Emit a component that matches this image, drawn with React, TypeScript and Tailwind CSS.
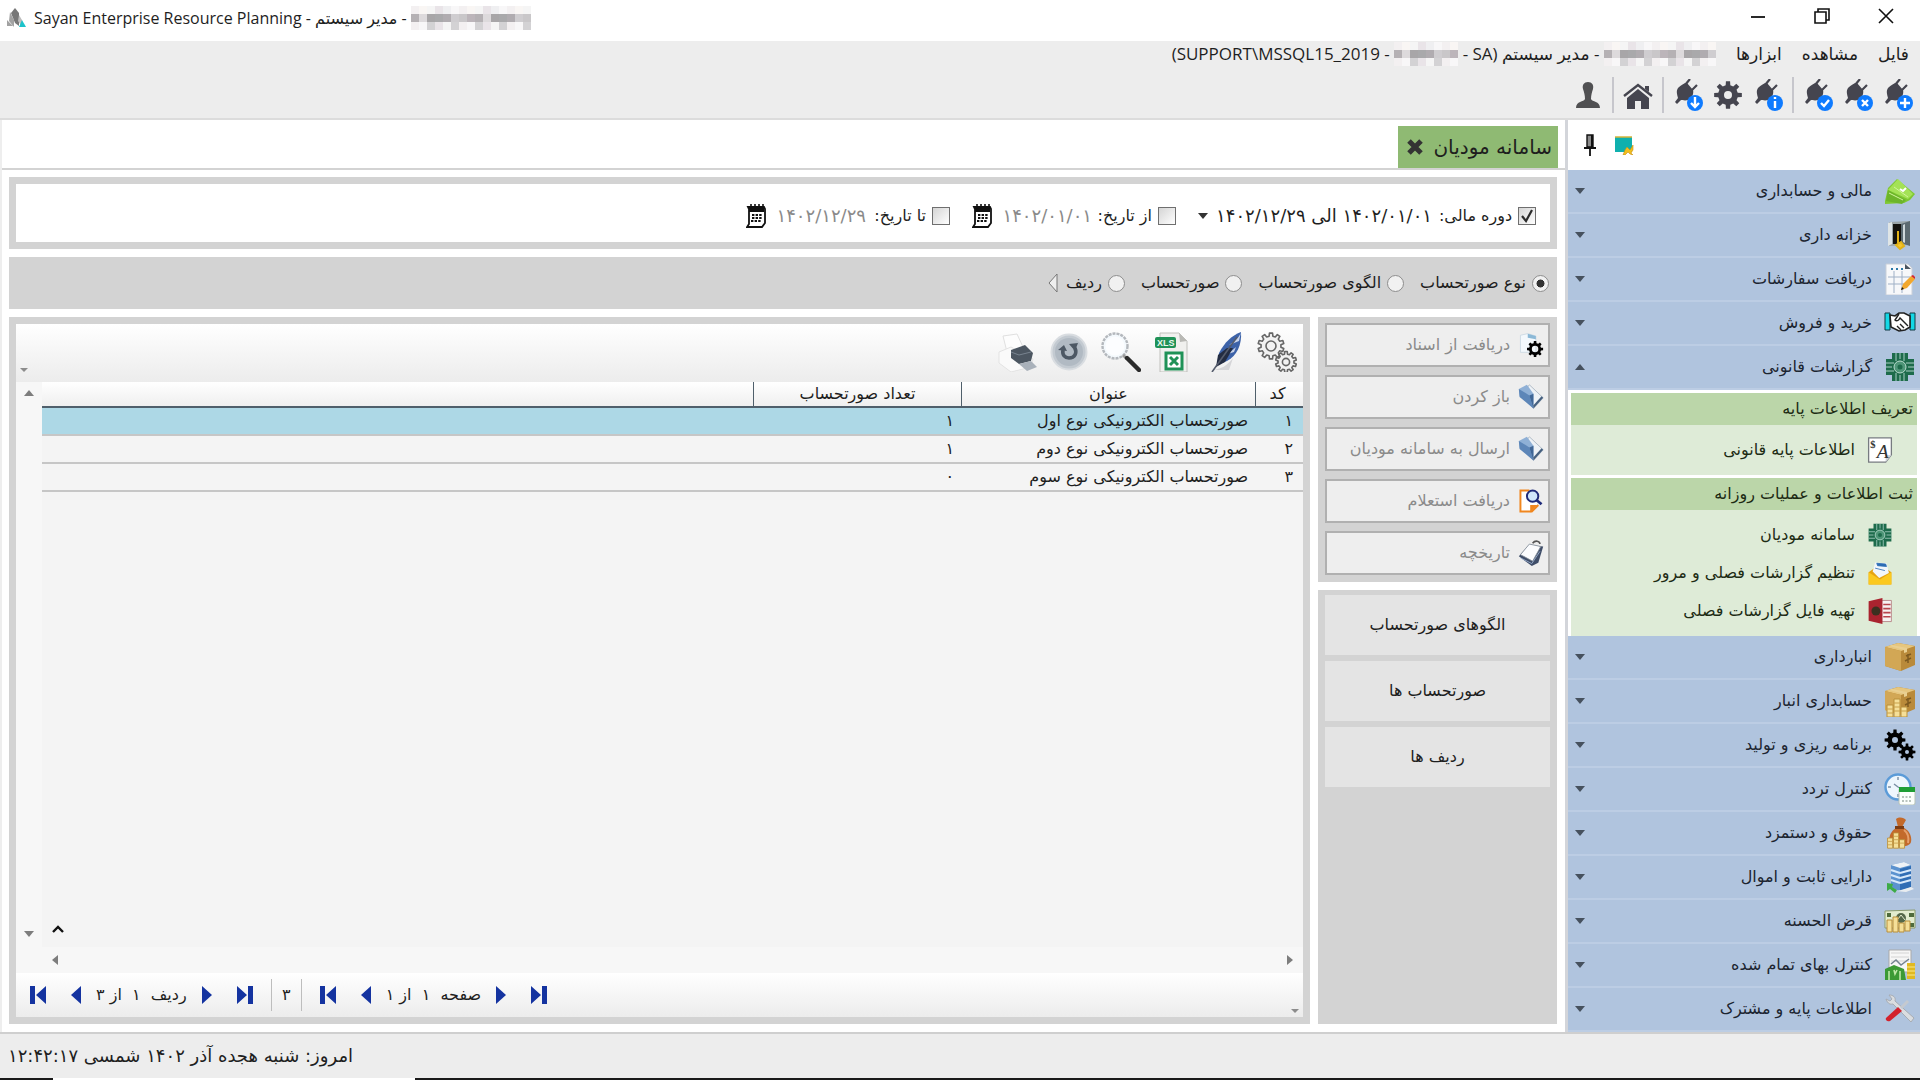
import React, { ReactNode } from 'react'

const dark = '#45454f'

function gearPath(cx: number, cy: number, outer: number, inner: number, teeth: number) {
  const points: string[] = []
  const step = (Math.PI * 2) / teeth
  for (let i = 0; i < teeth; i++) {
    const a = i * step - Math.PI / 2
    const corners = [[-0.3, inner], [-0.19, outer], [0.19, outer], [0.3, inner]]
    corners.forEach(([offset, r]) => {
      const t = a + offset * step
      points.push(`${(cx + r * Math.cos(t)).toFixed(2)} ${(cy + r * Math.sin(t)).toFixed(2)}`)
    })
  }
  return 'M' + points.join('L') + 'Z'
}

/* ---------- top toolbar icons ---------- */

const Plug = ({ children }: { children: ReactNode }) => (
  <svg className="w-8 h-8" viewBox="0 0 32 32" aria-hidden="true">
    <path d="M6 9c3-3 6-5 9-5l6 7c1 4-1 8-5 10-3 1-6 0-7 0l-4 4-2-2 3-4c-1-4-2-7 0-10z" fill={dark} />
    <path d="M13 6l5-6M19 12l6-6" stroke={dark} strokeWidth="2.2" />
    <circle cx="23" cy="24" r="8" fill="#0f7bff" />
    <g stroke="#fff" strokeWidth="2.4" fill="none">{children}</g>
  </svg>
)

const GearIcon = () => (
  <svg className="w-8 h-8" viewBox="0 0 32 32" aria-hidden="true">
    <path fillRule="evenodd" fill={dark} d={gearPath(16, 16, 14, 10, 8) + 'M16 12a4 4 0 1 0 0 8 4 4 0 0 0 0-8z'} />
  </svg>
)

const HomeIcon = () => (
  <svg className="w-8 h-8" viewBox="0 0 32 32" aria-hidden="true">
    <path d="M2 17L16 6l14 11" stroke={dark} strokeWidth="2.4" fill="none" />
    <path d="M23 7h4v6l-4-3zM16 10l11 9v11h-8v-8h-6v8H5V19z" fill={dark} />
  </svg>
)

const UserIcon = () => (
  <svg className="w-8 h-8" viewBox="0 0 32 32" aria-hidden="true">
    <path d="M16 3c4 0 6 3 5 7-1 3-2 6-2 10 1 3 9 2 9 9H4c0-7 8-6 9-9 0-4-1-7-2-10-1-4 1-7 5-7z" fill="#505052" />
  </svg>
)

/* ---------- sidebar icons ---------- */

const MoneyIcon = () => (
  <>
    <path d="M1 26l3-13 9-9 18 15-5 6-6 3-19 1z" fill="#7fc832" />
    <path d="M4 15l10-11 15 15-5 5z" fill="#a4e256" />
    <path d="M2 26l2-11 18 10-4 4z" fill="#6db52a" />
    <path d="M5 18l14 7M10 12l14 10" stroke="#d2f59b" fill="none" />
    <path d="M16 14l3 2 3-3" stroke="#fff" strokeWidth="2" fill="none" />
  </>
)
const SafeIcon = () => (
  <>
    <path d="M5 3l21-1v24l-21 1z" fill="#9ba5a8" />
    <path d="M9 5h8v20H9z" fill="#14130f" />
    <path d="M17 5l9-3v25l-9-3z" fill="#5c6a70" />
    <path d="M19 6l2-1v19l-2-1z" fill="#cfd8da" />
    <path d="M4 4l4-1v22l-4 2z" fill="#dfe5e6" />
    <path d="M14 12v12M12 26l5-3 3 4-4 3z" stroke="#e3b317" strokeWidth="2" fill="#f4c52d" />
  </>
)
const NoteIcon = () => (
  <>
    <path d="M2 1h22l4 4v27H2z" fill="#f7f8fa" stroke="#c9cfd8" />
    <path d="M10 8v22M18 8v22M4 14h22M4 21h22" stroke="#9fb0c6" />
    <path d="M7 6h2M12 6h2M17 6h2" stroke="#2a78a8" strokeWidth="2" />
    <path d="M21 1v5h6z" fill="#4b5560" />
    <path d="M17 27l2-6 8-8 4 3-8 9z" fill="#f3a82c" />
    <path d="M27 13l2-1 2 2v2z" fill="#d8242c" />
    <path d="M17 27l1-3 2 2z" fill="#1a1a1a" />
  </>
)
const HandshakeIcon = () => (
  <>
    <path d="M1 6h5v17H1zM26 6h5v17h-5z" fill="#14d8e6" stroke="#103a44" />
    <path d="M6 8l5 1 4-3h5l6 3v11l-5 3-6 1-8-4z" fill="#fff" stroke="#222" strokeWidth="1.6" />
    <path d="M15 7l-4 6c2 2 4 0 5-2l8 8M13 19l4 4M16 17l4 4" stroke="#222" strokeWidth="1.4" fill="none" />
  </>
)
const TaxIcon = () => (
  <>
    <path d="M8 2h16v6h6v16h-6v6H8v-6H2V8h6z" fill="#1d6b4b" />
    <path d="M12 2v8M16 2v6M20 2v8M12 30v-8M16 30v-6M20 30v-8M2 12h8M2 16h6M2 20h8M30 12h-8M30 16h-6M30 20h-8" stroke="#a9cfc4" />
    <circle cx="16" cy="16" r="6" fill="#4f9678" stroke="#b9dccf" />
    <circle cx="16" cy="16" r="2.5" fill="#1d6b4b" />
  </>
)
const Box = () => (
  <>
    <path d="M1 6l13-4 17 3v19l-14 6-16-5z" fill="#b98a3a" />
    <path d="M1 6l13-4 17 3-14 5z" fill="#e6c67e" />
    <path d="M1 6l16 4v20L1 25z" fill="#d2a755" />
    <path d="M8 4l15 3v4l-3 1V9L5 5z" fill="#e9cf91" />
    <path d="M22 15l5-2M21 20l6-3M24 13v9" stroke="#7d5a20" strokeWidth="1.5" />
  </>
)
const Coins = () => (
  <>
    <path d="M3 20h6v12H3zM10 14h6v18h-6zM17 22h6v10h-6z" fill="#f5df98" stroke="#b98f3a" />
    <path d="M3 24h6M3 28h6M10 18h6M10 22h6M10 26h6M17 26h6" stroke="#c9a14b" />
  </>
)
const BoxCoinsIcon = () => (
  <>
    <Box />
    <Coins />
  </>
)
const GearsIcon = () => (
  <>
    <path fillRule="evenodd" d={gearPath(11, 11, 10.5, 7.5, 8) + 'M11 8a3 3 0 1 0 0 6 3 3 0 0 0 0-6z'} />
    <path fillRule="evenodd" d={gearPath(23, 23, 8.5, 6, 8) + 'M23 21a2 2 0 1 0 0 4 2 2 0 0 0 0-4z'} />
  </>
)
const ClockIcon = () => (
  <>
    <circle cx="14" cy="14" r="12.5" fill="#eef6fd" stroke="#5b9bd8" strokeWidth="2.4" />
    <path d="M14 4v3M4 14h3M14 21v3M14 14l5 3M14 14l-4-3" stroke="#7a8ea3" strokeWidth="1.4" />
    <rect x="15" y="15" width="16" height="17" rx="2" fill="#fcfffc" stroke="#b7c2b7" />
    <path d="M15 14h16v5H15z" fill="#1f9e35" />
    <path d="M18 24h10M18 28h10" stroke="#b9c4bd" strokeDasharray="2 1.5" strokeWidth="2" />
  </>
)
const BagIcon = () => (
  <>
    <path d="M12 2c4-3 8-1 10 1l-4 7c8 3 10 10 9 15-1 6-18 6-21 1-2-6 1-13 8-16z" fill="#c36a2b" />
    <path d="M11 9h9v3h-9z" fill="#7d3c12" />
    <path d="M20 13c4 3 5 8 4 13" stroke="#e6a06b" strokeWidth="2" fill="none" />
    <g transform="translate(1 4) scale(.85)"><Coins /></g>
  </>
)
const BuildingIcon = () => (
  <>
    <path d="M7 4l13-3 7 3v22l-12 4-8-4z" fill="#5b92cf" />
    <path d="M7 4l13-3 7 3-11 3z" fill="#eef2f6" />
    <path d="M16 8l11-3v21l-11 4z" fill="#2f6db5" />
    <path d="M16 12l11-3M16 17l11-3M16 22l11-3M7 9l9 3M7 14l9 3M7 19l9 3" stroke="#d6e8fa" strokeWidth="2" />
    <path d="M12 30l10 1 8-3-3-2-10 3z" fill="#e9edf0" />
    <path d="M3 22l6 1-1 3 5 3-2 3-5-4-3 2z" fill="#3dab46" />
  </>
)
const BankNoteIcon = () => (
  <>
    <path d="M1 6l30-1v18H1z" fill="#e2ecce" stroke="#8a9a6d" />
    <path d="M3 8h4v4H3zM25 8h5v4h-5zM26 18h4v4h-4z" fill="#4f6b3c" />
    <circle cx="17" cy="13" r="5" fill="#55684a" />
    <path d="M14 14l3-4 4 5" stroke="#e2ecce" fill="none" />
    <path d="M3 15h5v12H3zM9 12h5v15H9zM15 18h5v9h-5zM21 16h5v10h-5z" fill="#f5df98" stroke="#b98f3a" />
  </>
)
const CostIcon = () => (
  <>
    <path d="M5 1h22v22H5z" fill="#f6f6f6" stroke="#a9a9a9" />
    <path d="M7 4h18M7 8h18M7 12h18" stroke="#d4d4d4" />
    <path d="M7 15l5-4 5 5 8-6" stroke="#748391" fill="none" strokeWidth="1.5" />
    <path d="M23 14h8v16h-8z" fill="#e0b922" />
    <path d="M23 18h8M23 22h8M23 26h8" stroke="#fbe98a" />
    <path d="M1 20l9-4 10 4 2 11H1z" fill="#3c9a35" />
    <path d="M5 22v9M10 21l1 4 2-4M16 22v9" stroke="#bfe8a9" strokeWidth="1.6" fill="none" />
  </>
)
const ToolsIcon = () => (
  <>
    <path d="M5 2c4 0 7 2 6 6l19 17-3 4L9 11C5 12 3 9 2 6l4 2 2-2z" fill="#dadde0" stroke="#a7acb2" />
    <path d="M14 14l4 4L6 28c-3 1-5-1-4-3z" fill="#d3222d" />
    <path d="M16 14l7-7 2 2-7 7z" fill="#c5c9cf" />
  </>
)
const SheetIcon = () => (
  <>
    <path d="M2 1h28v21l-7 9H2z" fill="#fff" stroke="#777b80" strokeWidth="1.6" />
    <path d="M30 22h-7v9z" fill="#cfd3d8" />
    <text x="4" y="14" fontSize="13" fontWeight="bold" fill="#333" className="[direction:ltr] font-[Liberation_Serif,serif]">$</text>
    <text x="12" y="26" fontSize="24" fontStyle="italic" fill="#333" className="[direction:ltr] font-[Liberation_Serif,serif]">A</text>
  </>
)
const EnvelopeIcon = () => (
  <>
    <path d="M2 15L16 5l14 10v15H2z" fill="#e6a413" />
    <path d="M10 3l14 1 3 12-12 6L7 14z" fill="#f2f6fb" />
    <path d="M12 4l11 1 1 3-11-1zM10 10l12 3" stroke="#2c6cb4" fill="#2c6cb4" />
    <path d="M2 15l14 9 14-9v15H2z" fill="#fbc91f" />
  </>
)
const BookIcon = () => (
  <>
    <path d="M18 3h12v26H18z" fill="#f7f2f2" stroke="#b07a7e" />
    <path d="M20 8h9M20 13h9M20 18h9M20 23h9" stroke="#b8454d" strokeWidth="2" />
    <path d="M2 4l17-4v32L2 28z" fill="#a9232f" />
    <circle cx="11" cy="16" r="5.5" fill="#3b3020" />
  </>
)

/* ---------- action button icons ---------- */

const DocGearIcon = () => (
  <>
    <path d="M3 4l9-2 10 3v20H3z" fill="#f3f8fc" stroke="#c8d6e2" />
    <path d="M12 2l10 3v4l-10-2z" fill="#8bb8d6" />
    <path fillRule="evenodd" d={gearPath(21, 21, 10, 7.5, 8) + 'M21 17a4 4 0 1 0 0 8 4 4 0 0 0 0-8z'} />
  </>
)
const OpenIcon = () => (
  <>
    <path d="M14 1l17 16-12 13L4 13z" fill="#eef2f6" stroke="#a3afbc" />
    <path d="M1 6l10-5 8 11v18L2 15z" fill="#8fb0d6" />
    <path d="M1 6l13 8 5 16L2 16z" fill="#5d86b8" />
    <path d="M14 14l5-2v18z" fill="#3f6696" />
    <path d="M19 30l12-13-2-2-10 11z" fill="#46607f" />
  </>
)
const InquiryIcon = () => (
  <>
    <path d="M14 3H3v26h14l8-8" fill="#fff" stroke="#f0861e" strokeWidth="2.4" />
    <path d="M15 30v-9h9z" fill="#f0861e" />
    <circle cx="18" cy="10" r="7" fill="#cfe6fb" stroke="#1e2a7a" strokeWidth="2.4" />
    <path d="M23 15l6 5" stroke="#1e2a7a" strokeWidth="3.4" />
  </>
)
const HistoryIcon = () => (
  <>
    <path d="M1 20L14 6l17 2-6 20-8 4z" fill="#3f4d68" />
    <path d="M3 18L14 5l14 3-10 18z" fill="#fbfcfe" stroke="#7d8794" />
    <path d="M18 4c3-4 9-3 9 1" stroke="#555" strokeWidth="2" fill="none" />
    <path d="M3 22l14 7 10-15" stroke="#9fb4d4" fill="none" />
  </>
)

const Icon = ({ draw, big }: { draw: ReactNode, big?: boolean }) => (
  <svg className={big ? 'w-8 h-8 shrink-0' : 'w-[26px] h-[26px] shrink-0'} viewBox="0 0 32 32" aria-hidden="true">{draw}</svg>
)

/* ---------- grid toolbar icons ---------- */

const gridTools = [
  {
    name: 'تنظیمات',
    draw: (
      <g fill="#f2f2f2" stroke="#666" strokeWidth="1.6" strokeLinejoin="round">
        <path d={gearPath(14, 14, 13, 10, 10)} />
        <circle cx="14" cy="14" r="5" />
        <path d={gearPath(29, 30, 10.5, 8, 10)} />
        <circle cx="29" cy="30" r="3.6" />
      </g>
    ),
  },
  {
    name: 'ویرایش',
    draw: (
      <>
        <path d="M8 38c8-1 14-4 20-12l-4 12z" fill="#d5d5d8" />
        <path d="M36 0c1 12-4 24-14 29l-10 4 2-12C20 10 26 4 36 0z" fill="#3c62a8" />
        <path d="M36 0c-2 6-6 9-12 13l10-4zM31 15l-8 7 6-2z" fill="#c9d4ea" />
        <path d="M22 16l6 0-8 14-9 5 2-12z" fill="#232c42" />
        <path d="M32 5L7 40" stroke="#555c6c" strokeWidth="1.6" />
      </>
    ),
  },
  {
    name: 'خروجی اکسل',
    draw: (
      <>
        <path d="M7 1h19l8 8v31H7z" fill="#f0f0ee" stroke="#c0c0bc" />
        <path d="M26 1l8 8-7 1z" fill="#b9b9b5" />
        <rect x="2" y="5" width="21" height="11" rx="2" fill="#1f9257" />
        <text x="4" y="14" fontSize="9" fontWeight="bold" fill="#e9f7ef" className="[direction:ltr] font-[Liberation_Sans,sans-serif]">XLS</text>
        <rect x="13" y="21" width="16" height="16" fill="#fff" stroke="#1f9257" strokeWidth="3" />
        <path d="M17 25l8 8M25 25l-8 8" stroke="#1f9257" strokeWidth="3" />
      </>
    ),
  },
  {
    name: 'جستجو',
    draw: (
      <>
        <circle cx="14" cy="14" r="12.5" fill="#f4f9fd" stroke="#b4b8bd" strokeWidth="2.4" strokeDasharray="3 1" />
        <circle cx="14" cy="14" r="9.5" fill="#fff" opacity=".7" />
        <path d="M22 23l4 4" stroke="#9b9b9b" strokeWidth="3" />
        <path d="M26 26l12 12" stroke="#2b2b2b" strokeWidth="4.4" strokeLinecap="round" />
      </>
    ),
  },
  {
    name: 'بازخوانی',
    draw: (
      <>
        <circle cx="20" cy="20" r="17.5" fill="#c3cad1" stroke="#d9dde1" strokeWidth="2" />
        <circle cx="20" cy="20" r="14" fill="#b1bac3" />
        <path d="M14 18c-1 5 2 8 6 8 6 0 8-5 6-10" stroke="#4d5864" strokeWidth="3.6" fill="none" />
        <path d="M9 18l6-5 3 6zM20 12l9-1-3 8z" fill="#4d5864" />
      </>
    ),
  },
  {
    name: 'چاپ',
    draw: (
      <>
        <path d="M6 4l14-2 6 13-16 5z" fill="#fdfdfd" stroke="#e0e0e0" />
        <path d="M2 20l12-5 22 12-2 8-20 5-12-9z" fill="#fafafa" stroke="#e3e3e3" />
        <path d="M14 18l14-5 8 8-2 8-12 3-8-6z" fill="#4c5661" />
        <path d="M22 32l12-3 6 6-10 4z" fill="#a9b1ba" />
        <path d="M14 20l8 3 12-3" stroke="#78838f" fill="none" />
      </>
    ),
  },
]

const mosaicTones = ['#f3f0f1', '#f8f7f8', '#efeff1', '#e9e4e8', '#f5f5f5', '#f9f6f4']
const mosaicDark = ['#b5b1b4', '#a9a9ab', '#c9c7c9', '#dddadc', '#b0acb0', '#bcb5ba', '#a8a6a8', '#cfcdd0']

// pixelated strip that hides a name
const Mosaic = ({ cols }: { cols: number }) => (
  <svg className="h-6 shrink-0" width={cols * 8} viewBox={`0 0 ${cols * 8} 24`} shapeRendering="crispEdges" aria-hidden="true">
    {Array.from({ length: cols }, (_, i) => (
      <g key={i}>
        <rect x={i * 8} y="0" width="8" height="8" fill={mosaicTones[(i * 5) % 6]} />
        <rect x={i * 8} y="8" width="8" height="8" fill={mosaicDark[(i * 3) % 8]} />
        <rect x={i * 8} y="16" width="8" height="8" fill={i % 3 == 2 ? '#d3d2d4' : mosaicTones[(i * 7) % 6]} />
      </g>
    ))}
  </svg>
)

const Triangle = ({ className }: { className: string }) => (
  <svg className={className} viewBox="0 0 10 6" preserveAspectRatio="none" fill="currentColor" aria-hidden="true">
    <path d="M0 0h10L5 6z" />
  </svg>
)

const modules = [
  { title: 'مالی و حسابداری', icon: <MoneyIcon /> },
  { title: 'خزانه داری', icon: <SafeIcon /> },
  { title: 'دریافت سفارشات', icon: <NoteIcon /> },
  { title: 'خرید و فروش', icon: <HandshakeIcon /> },
  { title: 'گزارشات قانونی', icon: <TaxIcon />, open: true },
]

const moreModules = [
  { title: 'انبارداری', icon: <Box /> },
  { title: 'حسابداری انبار', icon: <BoxCoinsIcon /> },
  { title: 'برنامه ریزی و تولید', icon: <GearsIcon /> },
  { title: 'کنترل تردد', icon: <ClockIcon /> },
  { title: 'حقوق و دستمزد', icon: <BagIcon /> },
  { title: 'دارایی ثابت و اموال', icon: <BuildingIcon /> },
  { title: 'قرض الحسنه', icon: <BankNoteIcon /> },
  { title: 'کنترل بهای تمام شده', icon: <CostIcon /> },
  { title: 'اطلاعات پایه و مشترک', icon: <ToolsIcon /> },
]

const groups = [
  { title: 'تعریف اطلاعات پایه', items: [{ title: 'اطلاعات پایه قانونی', icon: <SheetIcon /> }] },
  {
    title: 'ثبت اطلاعات و عملیات روزانه',
    items: [
      { title: 'سامانه مودیان', icon: <TaxIcon /> },
      { title: 'تنظیم گزارشات فصلی و مرور', icon: <EnvelopeIcon /> },
      { title: 'تهیه فایل گزارشات فصلی', icon: <BookIcon /> },
    ],
  },
]

const actions = [
  { title: 'دریافت از اسناد', icon: <DocGearIcon /> },
  { title: 'باز کردن', icon: <OpenIcon /> },
  { title: 'ارسال به سامانه مودیان', icon: <OpenIcon /> },
  { title: 'دریافت استعلام', icon: <InquiryIcon /> },
  { title: 'تاریخچه', icon: <HistoryIcon /> },
]

const rows = [
  { code: '۱', title: 'صورتحساب الکترونیکی نوع اول', count: '۱' },
  { code: '۲', title: 'صورتحساب الکترونیکی نوع دوم', count: '۱' },
  { code: '۳', title: 'صورتحساب الکترونیکی نوع سوم', count: '۰' },
]

const ModuleButton = ({ title, icon, open }: { title: string, icon: ReactNode, open?: boolean }) => (
  <button type="button" aria-expanded={!!open} className="flex items-center w-full h-11 pr-1 pl-[7px] gap-3 bg-[#b0c4de] border-b-2 border-[#bccde4] text-[#1c2530]">
    <Icon draw={icon} big />
    <span className="grow text-right">{title}</span>
    <Triangle className={open ? 'w-[10px] h-[6px] rotate-180 text-[#46515e]' : 'w-[10px] h-[6px] text-[#46515e]'} />
  </button>
)

const Sidebar = () => (
  <aside className="w-[355px] shrink-0 flex flex-col bg-white border-l-[3px] border-[#d3d5da]">
    <div className="h-[50px] flex items-center justify-end gap-4 pl-[14px]">
      <button type="button" aria-label="پنجره">
        <svg className="w-5 h-5" viewBox="0 0 20 20" aria-hidden="true">
          <path d="M1 2h17v15H1z" fill="#0fb0ae" />
          <path d="M1 2h17" stroke="#d6b53a" strokeWidth="1.5" />
          <path d="M9 20l2-5 2-3 3 3 3-5v5l-2 3 2 2-3-1-2-2-3 3z" fill="#f2bf1d" stroke="#c98f12" strokeWidth=".6" />
        </svg>
      </button>
      <button type="button" aria-label="سنجاق">
        <svg className="w-4 h-6" viewBox="0 0 16 24" aria-hidden="true">
          <path d="M5 2h6v12H5z" fill="#8b8b8b" stroke="#111" strokeWidth="1.4" />
          <path d="M9 2h2v12H9z" fill="#111" />
          <path d="M2 15h12M8 15v8" stroke="#111" strokeWidth="1.8" />
        </svg>
      </button>
    </div>
    <nav>
      {modules.map((m) => <ModuleButton key={m.title} {...m} />)}
      <div className="px-[3px] pt-[3px] flex flex-col gap-[3px]">
        {groups.map((g) => (
          <section key={g.title} className="bg-[#deebd7]">
            <h3 className="h-8 pr-1 flex items-center bg-[#bbd6a9] text-[#1d2b14]">{g.title}</h3>
            <div className="py-[6px]">
              {g.items.map((item) => (
                <a key={item.title} href="#" className="h-[38px] pr-6 flex items-center gap-3 text-[#1d2b14]">
                  <Icon draw={item.icon} />
                  {item.title}
                </a>
              ))}
            </div>
          </section>
        ))}
      </div>
      {moreModules.map((m) => <ModuleButton key={m.title} {...m} />)}
    </nav>
  </aside>
)

const CalendarIcon = () => (
  <svg className="w-5 h-6" viewBox="0 0 20 24" aria-hidden="true">
    <path d="M2 3h16l1 2v14l-3 4H1l2-3V5z" fill="#fff" stroke="#111" strokeWidth="1.8" />
    <path d="M3 4h15v4H3z" fill="#111" />
    <path d="M5 0v5M9 0v5M13 0v5M17 0v5" stroke="#111" strokeWidth="1.6" />
    <path d="M6 11h10M6 14h10M5 17h10" stroke="#111" strokeWidth="2" strokeDasharray="2.4 1.2" />
  </svg>
)

const Check = ({ id, checked }: { id: string, checked?: boolean }) => (
  <span className="relative flex shrink-0">
    <input id={id} type="checkbox" defaultChecked={checked} className="peer appearance-none w-[18px] h-[18px] border border-[#6f6f6f] bg-linear-to-br from-[#d5d5d5] to-white" />
    <svg className="hidden peer-checked:block absolute inset-0 w-[18px] h-[18px] pointer-events-none" viewBox="0 0 18 18" aria-hidden="true">
      <path d="M4 9l4 5 6-11" stroke="#2b2b2b" strokeWidth="2.2" fill="none" />
    </svg>
  </span>
)

const DateField = ({ id, label, value }: { id: string, label: string, value: string }) => (
  <div className="flex items-center">
    <Check id={id} />
    <label htmlFor={id} className="mr-[6px] w-[54px] whitespace-nowrap">{label}</label>
    <input type="text" aria-label={label} defaultValue={value} className="w-[92px] mr-[6px] text-lg text-[#8a8a8a] text-right" />
    <button type="button" aria-label="تقویم" className="mr-2"><CalendarIcon /></button>
  </div>
)

const Filters = () => (
  <section className="h-[72px] shrink-0 bg-white border-[7px] border-[#d3d3d3] pr-[14px] pt-[6px] flex items-center gap-[22px]">
    <div className="flex items-center">
      <Check id="period" checked />
      <label htmlFor="period" className="mr-[6px] w-[76px] whitespace-nowrap">دوره مالی:</label>
      <div className="relative flex items-center">
        <select aria-label="دوره مالی" className="appearance-none w-[238px] pr-1 text-lg bg-transparent">
          <option>۱۴۰۲/۰۱/۰۱ الی ۱۴۰۲/۱۲/۲۹</option>
        </select>
        <Triangle className="absolute left-0 w-[10px] h-[6px] text-[#333] pointer-events-none" />
      </div>
    </div>
    <DateField id="from" label="از تاریخ:" value="۱۴۰۲/۰۱/۰۱" />
    <DateField id="to" label="تا تاریخ:" value="۱۴۰۲/۱۲/۲۹" />
  </section>
)

const levels = ['نوع صورتحساب', 'الگوی صورتحساب', 'صورتحساب', 'ردیف']

const Levels = () => (
  <section className="h-[52px] shrink-0 bg-[#d3d3d3] pr-2 flex items-center gap-4">
    {levels.map((l, i) => (
      <label key={l} className="flex items-center gap-[6px]">
        <input type="radio" name="level" defaultChecked={i == 0} className="appearance-none w-[17px] h-[17px] rounded-full border border-[#8d8d8d] bg-[#f1f1f1] checked:bg-radial checked:from-[#333] checked:from-35% checked:to-[#f1f1f1] checked:to-40%" />
        {l}
      </label>
    ))}
    <svg className="w-[10px] h-5 -mr-2" viewBox="0 0 10 20" aria-hidden="true">
      <path d="M9 1v18L1 10z" fill="#eee" stroke="#777" />
    </svg>
  </section>
)

const NavIcon = ({ kind }: { kind: string }) => (
  <svg className="w-4 h-5" viewBox="0 0 16 20" fill="#1433a0" aria-hidden="true">
    {kind == 'first' && <path d="M0 1h5v18H0zM16 1v18L6 10z" />}
    {kind == 'prev' && <path d="M13 1v18L3 10z" />}
    {kind == 'next' && <path d="M3 1v18l10-9z" />}
    {kind == 'last' && <path d="M0 1v18l10-9zM11 1h5v18h-5z" />}
  </svg>
)

const Pager = ({ text, unit }: { text: string, unit: string }) => (
  <div className="flex items-center">
    <button type="button" aria-label={'اولین ' + unit} className="mr-[22px]"><NavIcon kind="first" /></button>
    <button type="button" aria-label={'قبلی ' + unit}><NavIcon kind="prev" /></button>
    <span dir="rtl" className="px-3 whitespace-pre">{text}</span>
    <button type="button" aria-label={'بعدی ' + unit}><NavIcon kind="next" /></button>
    <button type="button" aria-label={'آخرین ' + unit} className="ml-[22px]"><NavIcon kind="last" /></button>
  </div>
)

const Grid = () => (
  <section className="grow min-w-0 flex flex-col bg-[#f4f4f4] border-[7px] border-[#d3d3d3]">
    <div className="h-[58px] flex items-end justify-between pr-[6px] pb-[10px] bg-linear-to-b from-white to-[#ececec]">
      <div className="flex gap-3">
        {gridTools.map((t) => (
          <button key={t.name} type="button" aria-label={t.name}>
            <svg className="w-10 h-10" viewBox="0 0 40 40" aria-hidden="true">{t.draw}</svg>
          </button>
        ))}
      </div>
      <Triangle className="w-2 h-1 ml-1 text-[#8c8c8c]" />
    </div>
    <div className="grow flex">
      <div className="grow flex flex-col justify-between">
        <table className="w-full table-fixed border-separate border-spacing-0">
          <thead>
            <tr className="h-[26px] bg-linear-to-b from-white to-[#eee]">
              <th className="w-[47px] font-normal p-0 pr-1 border-b-2 border-[#4f5f6b]">کد</th>
              <th className="w-[294px] font-normal p-0 border-b-2 border-r border-[#4f5f6b]">عنوان</th>
              <th className="w-[208px] font-normal p-0 border-b-2 border-r border-[#4f5f6b]">تعداد صورتحساب</th>
              <th aria-label="خالی" className="font-normal p-0 border-b-2 border-r border-[#4f5f6b]"></th>
            </tr>
          </thead>
          <tbody>
            {rows.map((r, i) => (
              <tr key={r.code} className={i == 0 ? 'h-7 bg-[#add8e6]' : 'h-7'}>
                <td className="p-0 pr-[10px] border-b-2 border-[#c6c6c6]">{r.code}</td>
                <td className="p-0 pr-2 border-b-2 border-[#c6c6c6]">{r.title}</td>
                <td className="p-0 pr-2 border-b-2 border-[#c6c6c6]">{r.count}</td>
                <td className="p-0 border-b-2 border-[#c6c6c6]"></td>
              </tr>
            ))}
          </tbody>
        </table>
        <svg className="w-3 h-2 mb-[14px] mr-auto ml-[10px]" viewBox="0 0 12 8" aria-hidden="true">
          <path d="M1 7l5-5 5 5" stroke="#111" strokeWidth="2.4" fill="none" />
        </svg>
      </div>
      <div className="w-[26px] shrink-0 bg-[#f7f7f7] flex flex-col items-center justify-between pt-2 pb-[10px]">
        <Triangle className="w-[10px] h-[6px] rotate-180 text-[#7d7d7d]" />
        <Triangle className="w-[10px] h-[6px] text-[#7d7d7d]" />
      </div>
    </div>
    <div className="h-[26px] flex items-center justify-between pr-2 pl-[34px] bg-[#f7f7f7] text-[#7d7d7d]">
      <Triangle className="w-[10px] h-[6px] -rotate-90" />
      <Triangle className="w-[10px] h-[6px] rotate-90" />
    </div>
    <div dir="ltr" className="h-11 flex items-center pl-[14px] bg-linear-to-b from-white to-[#ececec]">
      <Pager text="ردیف  ۱  از ۳" unit="ردیف" />
      <span className="h-8 w-[31px] mx-[18px] flex items-center justify-center border-x border-[#bdbdbd]">۳</span>
      <Pager text="صفحه  ۱  از ۱" unit="صفحه" />
      <Triangle className="w-2 h-1 ml-auto mr-1 mt-8 text-[#8c8c8c]" />
    </div>
  </section>
)

const SidePanel = () => (
  <div className="w-[239px] shrink-0 flex flex-col gap-2">
    <section className="bg-[#d3d3d3] p-[7px] pt-[6px] flex flex-col gap-2">
      {actions.map((a) => (
        <button key={a.title} type="button" disabled className="h-11 pr-1 flex items-center gap-2 bg-[#eee] border-2 border-[#b0b0b0] text-[#8a8a8a]">
          <Icon draw={a.icon} />
          {a.title}
        </button>
      ))}
    </section>
    <section className="grow bg-[#d3d3d3] px-[7px] pt-[5px] flex flex-col gap-[6px]">
      {['الگوهای صورتحساب', 'صورتحساب ها', 'ردیف ها'].map((t) => (
        <button key={t} type="button" className="h-[60px] bg-[#e4e4e4]">{t}</button>
      ))}
    </section>
  </div>
)

const TitleBar = () => (
  <header dir="ltr" className="h-[41px] pl-[6px] pb-[6px] flex items-center bg-white">
    <svg className="w-5 h-6 shrink-0" viewBox="0 0 20 24" aria-hidden="true">
      <path d="M9 2l4 5v13l-4-3-4-10z" fill="#777" />
      <path d="M4 6l4 8v7l-5-6zM1 14l6 6H1z" fill="#a2a2a2" />
      <path d="M13 9l3 5v7l-4-6z" fill="#bcbcbc" />
      <path d="M13 21l3-7 4 7z" fill="#1cc3cb" />
    </svg>
    <h1 className="ml-2 flex items-center whitespace-pre font-['Open_Sans','DejaVu_Sans',sans-serif]">
      <span>Sayan Enterprise Resource Planning - </span>
      <bdi>مدیر سیستم</bdi>
      <span> - </span>
    </h1>
    <Mosaic cols={15} />
    <div className="ml-auto mr-[26px] mb-1 flex gap-12">
      <button type="button" aria-label="Minimize">
        <svg className="w-4 h-4" viewBox="0 0 16 16" aria-hidden="true"><path d="M1 9h14" stroke="#111" strokeWidth="1.8" /></svg>
      </button>
      <button type="button" aria-label="Restore">
        <svg className="w-4 h-4" viewBox="0 0 16 16" fill="none" stroke="#111" strokeWidth="1.6" aria-hidden="true"><path d="M1 4h11v11H1zM4 4V1h11v11h-3" /></svg>
      </button>
      <button type="button" aria-label="Close">
        <svg className="w-4 h-4" viewBox="0 0 16 16" aria-hidden="true"><path d="M1 1l14 14M15 1L1 15" stroke="#111" strokeWidth="1.6" /></svg>
      </button>
    </div>
  </header>
)

const Separator = () => <span className="w-[2px] h-9 bg-[#c6c6cc]" />

const MenuBar = () => (
  <div className="h-[79px] bg-[#ededed] border-b-2 border-[#dcdcdc]">
    <nav className="h-[26px] pr-[11px] flex items-center text-[17px]">
      <button type="button">فایل</button>
      <button type="button" className="mr-5">مشاهده</button>
      <button type="button" className="mr-5">ابزارها</button>
      <div dir="ltr" className="mr-5 flex items-center whitespace-pre font-['Open_Sans','DejaVu_Sans',sans-serif]">
        <span>(SUPPORT\MSSQL15_2019 - </span>
        <Mosaic cols={8} />
        <span> - SA) </span>
        <bdi>مدیر سیستم</bdi>
        <span> - </span>
        <Mosaic cols={14} />
      </div>
    </nav>
    <div className="mt-[10px] h-9 pr-[6px] flex items-center gap-2">
      <button type="button" aria-label="افزودن اتصال"><Plug><path d="M23 19v10M18 24h10" /></Plug></button>
      <button type="button" aria-label="قطع اتصال"><Plug><path d="M20 21l6 6M26 21l-6 6" /></Plug></button>
      <button type="button" aria-label="آزمون اتصال"><Plug><path d="M19 24l3 3 5-6" /></Plug></button>
      <Separator />
      <button type="button" aria-label="اطلاعات اتصال"><Plug><path d="M23 22v7M23 18v2" /></Plug></button>
      <button type="button" aria-label="تنظیمات"><GearIcon /></button>
      <button type="button" aria-label="دریافت"><Plug><path d="M23 18v10M19 24l4 4 4-4" /></Plug></button>
      <Separator />
      <button type="button" aria-label="خانه"><HomeIcon /></button>
      <Separator />
      <button type="button" aria-label="کاربر"><UserIcon /></button>
    </div>
  </div>
)

export default function App() {
  return (
    <div dir="rtl" lang="fa" className="min-h-screen flex flex-col bg-white text-[#1e1e1e] text-[16px] leading-6 font-['DejaVu_Sans',sans-serif]">
      <TitleBar />
      <MenuBar />
      <div className="grow flex">
        <Sidebar />
        <main className="grow min-w-0 flex flex-col border-l-2 border-[#eee]">
          <div className="h-[50px] shrink-0 pr-[7px] flex items-end border-b-2 border-[#d3d3d3]">
            <div className="h-[42px] w-40 pr-[6px] flex items-center gap-[10px] bg-[#8fba73]">
              <span className="text-xl leading-6">سامانه مودیان</span>
              <button type="button" aria-label="بستن">
                <svg className="w-4 h-4" viewBox="0 0 16 16" aria-hidden="true"><path d="M2 2l12 12M14 2L2 14" stroke="#333" strokeWidth="5" /></svg>
              </button>
            </div>
          </div>
          <div className="grow flex flex-col gap-2 pt-[7px] pb-2 pr-2 pl-[7px]">
            <Filters />
            <Levels />
            <div className="grow flex gap-2">
              <SidePanel />
              <Grid />
            </div>
          </div>
        </main>
      </div>
      <footer dir="ltr" className="h-[46px] px-2 flex items-center bg-[#ededed] border-t-2 border-[#cfcfcf]">
        <p dir="rtl" className="text-lg leading-6">امروز: شنبه هجده آذر ۱۴۰۲ شمسی ۱۲:۴۲:۱۷</p>
      </footer>
      <div dir="ltr" className="h-1 flex bg-[#1a1a1a]">
        <span className="ml-[53px] w-[362px] bg-white" />
      </div>
    </div>
  )
}
